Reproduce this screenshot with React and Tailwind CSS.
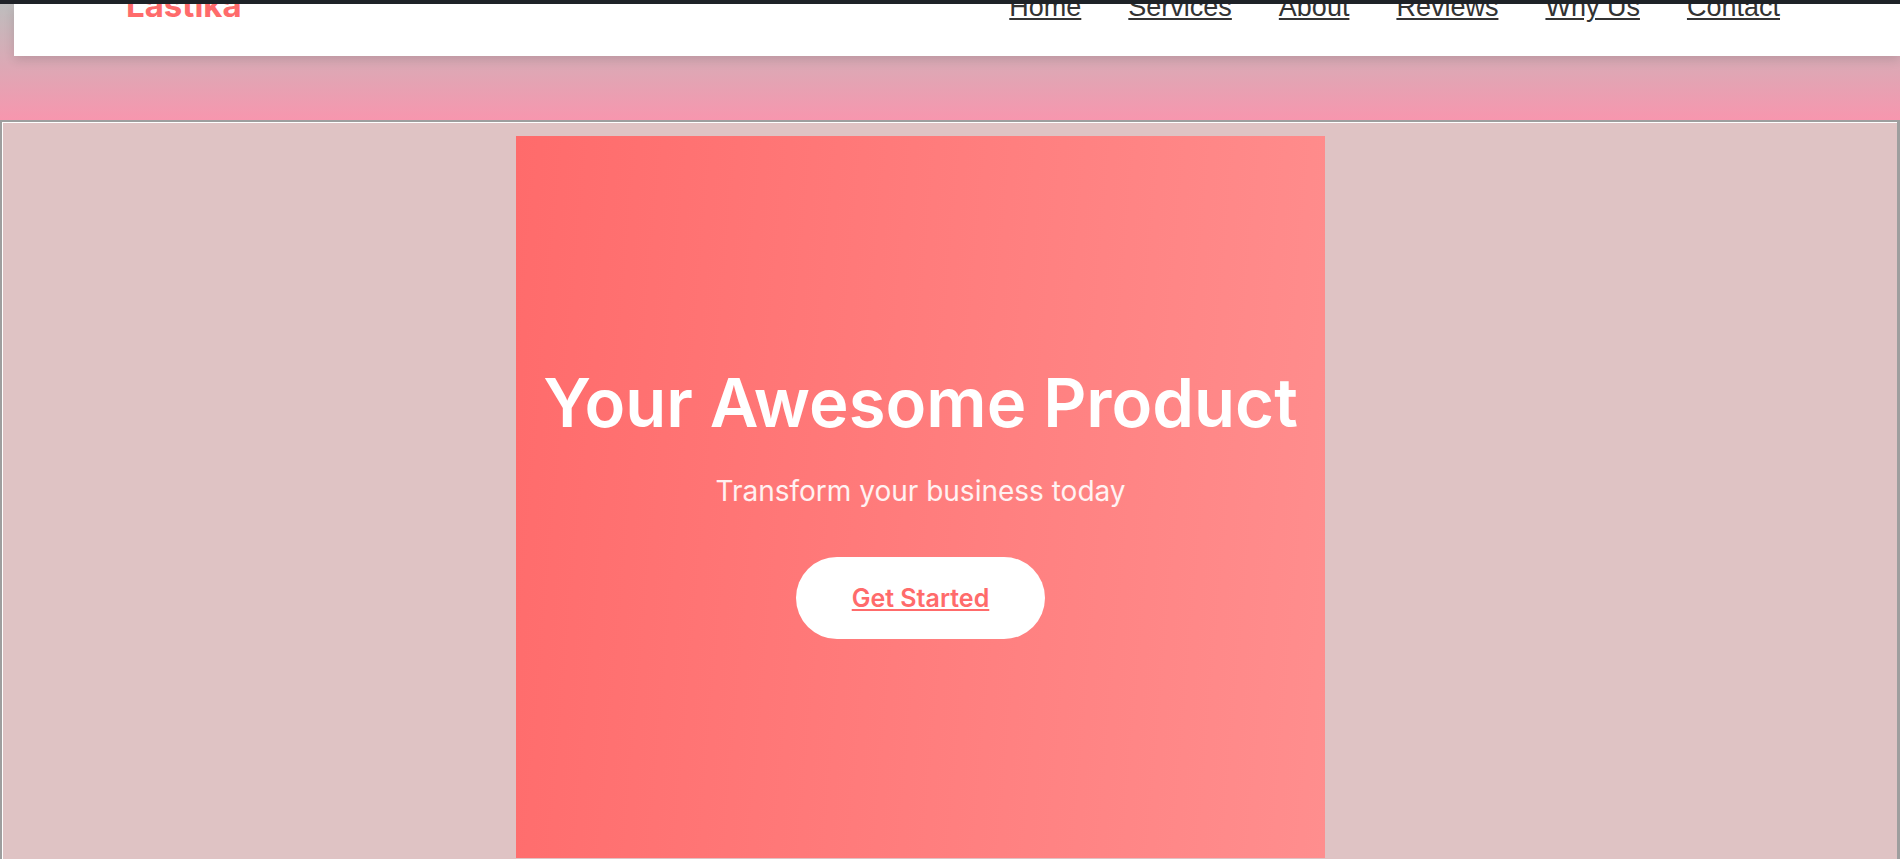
const links = ["Home", "Services", "About", "Reviews", "Why Us", "Contact"];

function Header() {
  return (
    <header className="h-[52px] bg-white shadow-[0_4px_10px_rgba(0,0,0,0.12)] flex items-start justify-between pl-[112px] pr-[120px] overflow-hidden">
      <div className="-mt-[15px] text-[33px] leading-none font-bold text-[#ff6b6b] font-['Inter',sans-serif]">
        Lastika
      </div>
      <nav className="-mt-[10px] flex gap-[47px] text-[27px] leading-none text-[#333333] font-['Liberation_Sans',Arial,sans-serif]">
        {links.map((l) => (
          <a key={l} href="#" className="underline">
            {l}
          </a>
        ))}
      </nav>
    </header>
  );
}

function Hero() {
  return (
    <section className="w-[809px] h-[722px] bg-[linear-gradient(95deg,#ff6b6b,#ff8e8e)] flex flex-col items-center justify-center pt-[8px] font-['Inter',sans-serif] text-white">
      <h1 className="text-[67px] leading-[1.2] font-semibold mb-[27px]">Your Awesome Product</h1>
      <p className="text-[28px] leading-[1.5] text-white/90 mb-[45px]">Transform your business today</p>
      <a
        href="#"
        className="bg-white rounded-full px-[56px] py-[27px] text-[25px] leading-[28px] font-semibold text-[#ff6b6b] underline"
      >
        Get Started
      </a>
    </section>
  );
}

export default function App() {
  return (
    <div className="h-[859px] overflow-hidden flex flex-col">
      <div className="h-[4px] shrink-0 bg-[#1f2328]" />
      <div className="h-[116px] shrink-0 pl-[14px] bg-[linear-gradient(180deg,#bdbdbd,#f796ae)]">
        <Header />
      </div>
      <div className="flex-1 border-t-2 border-l-2 border-r-[3px] border-[#9e9e9e]">
        <div className="h-full border-t border-l border-white bg-[#dfc3c4] pt-[13px] pl-[513px]">
          <Hero />
        </div>
      </div>
    </div>
  );
}
